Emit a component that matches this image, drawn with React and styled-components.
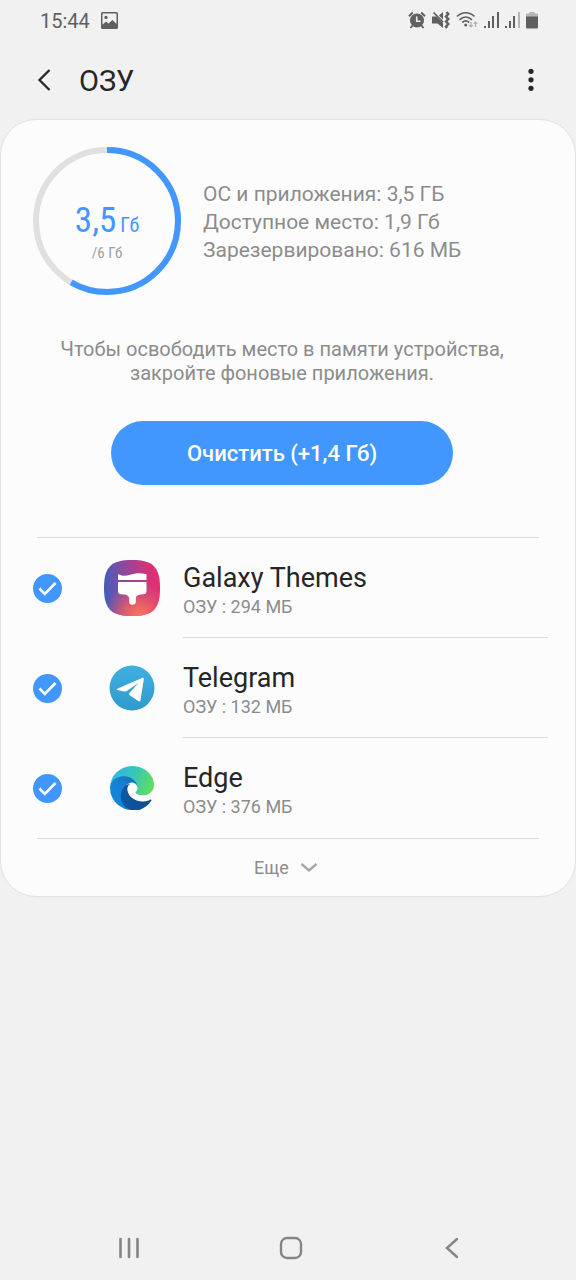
import React, { useState } from 'react'
import styled, { createGlobalStyle } from 'styled-components'

const GlobalStyle = createGlobalStyle`
  * {
    box-sizing: border-box;
  }

  body {
    margin: 0;
    background: #f1f1f1;
    color: #262626;
    font-family: Roboto, 'Noto Sans', sans-serif;
  }

  button {
    padding: 0;
    border: 0;
    background: none;
    color: inherit;
    font: inherit;
    cursor: pointer;
  }

  svg {
    display: block;
    flex-shrink: 0;
  }
`

const Page = styled.div`
  min-height: 100vh;
  display: flex;
  flex-direction: column;
`

const StatusBar = styled.div`
  height: 40px;
  padding: 0 38px 0 40px;
  display: flex;
  align-items: center;
  justify-content: space-between;
  color: #606060;
`

const StatusGroup = styled.div`
  display: flex;
  align-items: center;
  gap: ${props => props.$gap}px;
`

const Clock = styled.span`
  padding-top: 2px;
  font-size: 20px;
  line-height: 24px;
`

const Header = styled.header`
  height: 79px;
  padding: 0 33px 0 32px;
  display: flex;
  align-items: center;
  gap: 23px;
`

const IconButton = styled.button`
  width: 24px;
  height: 32px;
  display: flex;
  align-items: center;
  justify-content: center;
`

const Title = styled.h1`
  flex: 1;
  margin: 0;
  padding-top: 2px;
  font-size: 29px;
  font-weight: 400;
  line-height: 32px;
`

const Card = styled.main`
  border: 1px solid #e2e2e2;
  border-radius: 36px;
  background: #fcfcfc;
`

const Summary = styled.section`
  padding: 27px 32px 0;
  display: flex;
  align-items: center;
  gap: 22px;
`

const Gauge = styled.div`
  display: grid;
  place-items: center;

  > * {
    grid-area: 1 / 1;
  }
`

const GaugeText = styled.div`
  padding-top: 24px;
  text-align: center;
  font-family: 'Roboto Condensed', 'Liberation Sans Narrow', Roboto, sans-serif;
`

const Used = styled.div`
  color: #4297ff;
  font-size: 35px;
  line-height: 36px;

  small {
    margin-left: 4px;
    font-size: 20px;
  }
`

const Total = styled.div`
  color: #a0a0a0;
  font-size: 15px;
  line-height: 20px;
`

const Details = styled.ul`
  margin: 0;
  padding: 2px 0 0;
  list-style: none;
  color: #8c8c8c;
  font-size: 21px;
  line-height: 28px;
`

const Cleanup = styled.section`
  padding: 42px 44px 52px 32px;
  display: flex;
  flex-direction: column;
  align-items: center;
  gap: 36px;
`

const Hint = styled.p`
  max-width: 480px;
  margin: 0;
  color: #8c8c8c;
  font-size: 20px;
  line-height: 24px;
  text-align: center;
`

const CleanButton = styled.button`
  width: 100%;
  max-width: 342px;
  height: 64px;
  border-radius: 32px;
  background: #4297ff;
  color: #fff;
  font-size: 22px;
  font-weight: 500;
`

const Divider = styled.hr`
  height: 1px;
  margin: 0 36px;
  border: 0;
  background: #d9d9d9;
`

const AppList = styled.ul`
  margin: 0;
  padding: 0;
  list-style: none;
`

const AppRow = styled.label`
  height: 100px;
  padding: 0 27px 0 32px;
  display: flex;
  align-items: center;
  cursor: pointer;
`

const Check = styled.span`
  display: grid;
  place-items: center;

  > * {
    grid-area: 1 / 1;
  }

  svg {
    pointer-events: none;
  }
`

const CheckInput = styled.input`
  appearance: none;
  width: 29px;
  height: 29px;
  margin: 0;
  border: 2px solid #b4b4b4;
  border-radius: 50%;

  &:checked {
    border-color: #4297ff;
    background: #4297ff;
  }
`

const AppIcon = styled.span`
  width: 56px;
  margin: 0 23px 0 42px;
  display: flex;
  justify-content: center;
`

const AppInfo = styled.span`
  flex: 1;
  height: 100px;
  padding-top: 7px;
  display: flex;
  flex-direction: column;
  justify-content: center;
  border-bottom: 1px solid #dcdcdc;

  li:last-child & {
    border-color: transparent;
  }
`

const AppName = styled.span`
  font-size: 27px;
  line-height: 32px;
`

const AppMemory = styled.span`
  color: #8c8c8c;
  font-size: 18px;
  line-height: 26px;
`

const MoreButton = styled.button`
  width: 100%;
  height: 57px;
  padding-right: 4px;
  display: flex;
  align-items: center;
  justify-content: center;
  gap: 11px;
  color: #8c8c8c;
  font-size: 18px;
`

const NavBar = styled.nav`
  height: 64px;
  margin-top: auto;
  padding: 0 108px 0 113px;
  display: flex;
  align-items: center;
  justify-content: space-between;
  color: #858585;
`

const NavButton = styled.button`
  width: 32px;
  height: 32px;
  display: flex;
  align-items: center;
  justify-content: center;
`

const PictureIcon = () => (
  <svg width="17" height="17" viewBox="0 0 17 17">
    <path
      fill="currentColor"
      fillRule="evenodd"
      d="M1.500 0h14A1.500 1.500 0 0 1 17 1.500v14a1.500 1.500 0 0 1-1.500 1.500h-14A1.500 1.500 0 0 1 0 15.500v-14A1.500 1.500 0 0 1 1.500 0zM1.500 1.500v11.300L5 9.500l2.500 2L11.500 8l4 4V1.500zM5 3.700a1.700 1.700 0 1 1 0 3.400 1.700 1.700 0 0 1 0-3.400z"
    />
  </svg>
)

const AlarmIcon = () => (
  <svg width="18" height="18" viewBox="0 0 18 18" fill="none" stroke="currentColor">
    <circle cx="9" cy="9.500" r="7" fill="currentColor" stroke="none" />
    <path d="M1 5.200 4.800 1.500M17 5.200l-3.800-3.700" strokeWidth="2" />
    <path d="M4.500 14.500 2.500 17M13.500 14.500l2 2.500" strokeWidth="2" />
    <path d="M8.700 5.500v4.700h3.800" stroke="#f1f1f1" strokeWidth="1.600" />
  </svg>
)

const MuteIcon = () => (
  <svg width="18" height="18" viewBox="0 0 18 18" fill="none" stroke="currentColor">
    <path fill="currentColor" stroke="none" d="M0 5.500h4.500L11 12v5l-5.500-4.500H0zM7 4.500 11 1v7.500z" />
    <path d="m1.500 1.500 9.500 9.500" strokeWidth="1.700" />
    <path d="m14.500 1 1.800 2-2.300 2.500 2.300 2.500L14 10.500l2.300 2.500-2.300 2.500 1 1.500" strokeWidth="2.400" />
  </svg>
)

const WifiIcon = () => (
  <svg width="22" height="18" viewBox="0 0 22 18" fill="none" stroke="currentColor">
    <path d="M1 5.500c5-5 12.500-5 17.500 0M3.500 8.800c3.800-3.600 8.700-3.600 12.500 0M6.300 11.500c2.200-2 4.700-2 6.900 0" strokeWidth="1.700" />
    <circle cx="9.700" cy="14" r="1.500" fill="currentColor" stroke="none" />
    <path d="M15 11v5M13.200 14.200 15 16l1.800-1.800M19.500 16v-5M17.700 12.800 19.500 11l1.800 1.800" stroke="#b0b0b0" strokeWidth="1.200" />
  </svg>
)

const SignalIcon = ({ weak }) => (
  <svg width="15" height="18" viewBox="0 0 15 18" fill="currentColor">
    <rect x="0" y="15" width="2" height="2" />
    <rect x="4" y="10" width="2" height="7" />
    <rect x="8" y="5" width="2" height="12" />
    <rect x="13" y="1" width="2" height="16" opacity={weak ? 0.4 : 1} />
  </svg>
)

const BatteryIcon = () => (
  <svg width="12" height="18" viewBox="0 0 12 18" fill="currentColor">
    <path d="M3.500 1h5v1.500H11a1 1 0 0 1 1 1V6H0V3.500a1 1 0 0 1 1-1h2.500z" opacity="0.4" />
    <path d="M0 5.500h12v11a1 1 0 0 1-1 1H1a1 1 0 0 1-1-1z" />
  </svg>
)

const BackIcon = () => (
  <svg width="14" height="24" viewBox="0 0 14 24" fill="none" stroke="currentColor">
    <path d="M12.500 2 2.500 12l10 10" strokeWidth="2.300" />
  </svg>
)

const DotsIcon = () => (
  <svg width="6" height="24" viewBox="0 0 6 24" fill="currentColor">
    <circle cx="3" cy="3.300" r="2.600" />
    <circle cx="3" cy="11.800" r="2.600" />
    <circle cx="3" cy="20.300" r="2.600" />
  </svg>
)

const Ring = ({ share }) => {
  const length = 2 * Math.PI * 71
  return (
    <svg width="148" height="148" viewBox="0 0 148 148" fill="none" strokeWidth="6">
      <circle cx="74" cy="74" r="71" stroke="#e0e0e0" />
      <circle
        cx="74"
        cy="74"
        r="71"
        stroke="#4297ff"
        strokeDasharray={`${length * share} ${length}`}
        transform="rotate(-90 74 74)"
      />
    </svg>
  )
}

const ThemesIcon = () => (
  <svg width="56" height="56" viewBox="0 0 56 56">
    <defs>
      <linearGradient id="themesBase" x1="0" y1="0.500" x2="1" y2="0.400">
        <stop offset="0.050" stopColor="#4a5ab8" />
        <stop offset="0.450" stopColor="#9a4598" />
        <stop offset="0.900" stopColor="#e02f72" />
      </linearGradient>
      <radialGradient id="themesGlow" cx="0.620" cy="1.020" r="0.650">
        <stop offset="0" stopColor="#fb7a58" />
        <stop offset="0.400" stopColor="#f2645f" stopOpacity="0.800" />
        <stop offset="1" stopColor="#e0507a" stopOpacity="0" />
      </radialGradient>
    </defs>
    <path fill="url(#themesBase)" d="M28 0c21 0 28 7 28 28s-7 28-28 28S0 49 0 28 7 0 28 0z" />
    <path fill="url(#themesGlow)" d="M28 0c21 0 28 7 28 28s-7 28-28 28S0 49 0 28 7 0 28 0z" />
    <path
      fill="#fff"
      d="M14 14c3.500 2 7.500 2.300 12 .8 6-2 11-2 16.500-.6V20H14zM14 22h28.500v9c0 2-1 3-3 3.200l-3 .3c-3.500.4-4.700 2-4.700 4.500v2.500a3.300 3.300 0 0 1-6.600 0V39c0-2.500-1.400-4.100-4.700-4.500l-3.500-.3c-2-.2-3-1.200-3-3.200z"
    />
  </svg>
)

const TelegramIcon = () => (
  <svg width="46" height="46" viewBox="0 0 46 46">
    <defs>
      <linearGradient id="telegram" x1="0" y1="0" x2="0" y2="1">
        <stop offset="0" stopColor="#3fb0e0" />
        <stop offset="1" stopColor="#309acb" />
      </linearGradient>
    </defs>
    <circle cx="23" cy="23" r="22.500" fill="url(#telegram)" />
    <path
      fill="#fff"
      d="M8.200 23.800 33 13c1.300-.5 2 .2 1.800 1.500L31.500 35c-.3 1.600-1.300 1.900-2.500 1.100l-8.500-6.200c-.8-.6-.8-1.200-.1-1.900L29.500 18l-12.200 8.200c-.8.5-1.500.5-2.300.3l-6.500-1.400c-.9-.2-1-.9-.3-1.300z"
    />
  </svg>
)

const EdgeIcon = () => (
  <svg width="44" height="44" viewBox="0 0 256 256">
    <defs>
      <linearGradient id="edgeDeep" x1="63" y1="177" x2="241" y2="177" gradientUnits="userSpaceOnUse">
        <stop offset="0" stopColor="#0c59a4" />
        <stop offset="1" stopColor="#114a8b" />
      </linearGradient>
      <linearGradient id="edgeBlue" x1="157" y1="99" x2="46" y2="221" gradientUnits="userSpaceOnUse">
        <stop offset="0" stopColor="#1474c4" />
        <stop offset="0.400" stopColor="#1580d0" />
        <stop offset="1" stopColor="#1286dc" />
      </linearGradient>
      <linearGradient id="edgeTop" x1="20" y1="60" x2="235" y2="140" gradientUnits="userSpaceOnUse">
        <stop offset="0" stopColor="#35b8e0" />
        <stop offset="0.450" stopColor="#37c4bb" />
        <stop offset="1" stopColor="#5cdf60" />
      </linearGradient>
    </defs>
    <path
      fill="url(#edgeBlue)"
      d="M105.700 241.400a79.200 79.200 0 0 1-22.700-21.300 80.700 80.700 0 0 1 29.500-120c3.200-1.500 8.500-4.100 15.600-4a32.400 32.400 0 0 1 25.700 13 31.900 31.900 0 0 1 6.300 18.700c0-.2 24.500-79.600-80-79.600-43.900 0-80 41.700-80 78.200a130.200 130.200 0 0 0 12.100 56 128 128 0 0 0 156.400 67.100 75.500 75.500 0 0 1-62.900-8.100z"
    />
    <path
      fill="url(#edgeDeep)"
      d="M235.700 195.500a93.700 93.700 0 0 1-10.600 4.700 101.900 101.900 0 0 1-35.900 6.400c-47.300 0-88.500-32.500-88.500-74.300a31.500 31.500 0 0 1 16.400-27.300c-42.800 1.800-53.800 46.400-53.800 72.500 0 74 68.100 81.400 82.800 81.400 7.900 0 19.800-2.300 27-4.600l1.300-.4a128.300 128.300 0 0 0 66.600-52.800 4 4 0 0 0-5.300-5.600z"
    />
    <path
      fill="url(#edgeTop)"
      d="M152.300 148.900c-.8 1-3.300 2.500-3.300 5.700 0 2.600 1.700 5.100 4.700 7.200 14.400 10 41.500 8.700 41.600 8.700a59.600 59.600 0 0 0 30.300-8.300 61.400 61.400 0 0 0 30.400-52.900c.3-22.400-8-37.300-11.300-43.900C223.500 23.900 177.700 0 128 0A128 128 0 0 0 0 126.200c.5-36.500 36.800-66 80-66 3.500 0 23.500.3 42 10.100 16.300 8.600 24.900 18.900 30.800 29.200 6.200 10.700 7.300 24.100 7.300 29.500 0 5.300-2.700 13.300-7.800 19.900z"
    />
  </svg>
)

const apps = [
  { name: 'Galaxy Themes', memory: 294, Icon: ThemesIcon },
  { name: 'Telegram', memory: 132, Icon: TelegramIcon },
  { name: 'Edge', memory: 376, Icon: EdgeIcon }
]

export default function App() {
  const [selected, setSelected] = useState(apps.map(app => app.name))

  const toggle = name =>
    setSelected(
      selected.includes(name)
        ? selected.filter(el => el !== name)
        : [...selected, name]
    )

  return (
    <Page>
      <GlobalStyle />
      <StatusBar>
        <StatusGroup $gap={11}>
          <Clock>15:44</Clock>
          <PictureIcon />
        </StatusGroup>
        <StatusGroup $gap={6}>
          <AlarmIcon />
          <MuteIcon />
          <WifiIcon />
          <SignalIcon />
          <SignalIcon weak />
          <BatteryIcon />
        </StatusGroup>
      </StatusBar>

      <Header>
        <IconButton aria-label="Назад">
          <BackIcon />
        </IconButton>
        <Title>ОЗУ</Title>
        <IconButton aria-label="Меню">
          <DotsIcon />
        </IconButton>
      </Header>

      <Card>
        <Summary>
          <Gauge>
            <Ring share={3.5 / 6} />
            <GaugeText>
              <Used>
                3,5<small>Гб</small>
              </Used>
              <Total>/6 Гб</Total>
            </GaugeText>
          </Gauge>
          <Details>
            <li>ОС и приложения: 3,5 ГБ</li>
            <li>Доступное место: 1,9 Гб</li>
            <li>Зарезервировано: 616 МБ</li>
          </Details>
        </Summary>

        <Cleanup>
          <Hint>
            Чтобы освободить место в памяти устройства, закройте фоновые
            приложения.
          </Hint>
          <CleanButton>Очистить (+1,4 Гб)</CleanButton>
        </Cleanup>

        <Divider />
        <AppList>
          {apps.map(({ name, memory, Icon }) => (
            <li key={name}>
              <AppRow>
                <Check>
                  <CheckInput
                    type="checkbox"
                    checked={selected.includes(name)}
                    onChange={() => toggle(name)}
                  />
                  <svg width="29" height="29" viewBox="0 0 29 29" fill="none">
                    <path d="m6.500 14.500 5.300 5.300L22.500 9" stroke="#fff" strokeWidth="2.600" />
                  </svg>
                </Check>
                <AppIcon>
                  <Icon />
                </AppIcon>
                <AppInfo>
                  <AppName>{name}</AppName>
                  <AppMemory>ОЗУ : {memory} МБ</AppMemory>
                </AppInfo>
              </AppRow>
            </li>
          ))}
        </AppList>
        <Divider />
        <MoreButton>
          Еще
          <svg width="18" height="12" viewBox="0 0 18 12" fill="none">
            <path d="m1.500 2 7.500 6.500L16.500 2" stroke="#a6a6a6" strokeWidth="2.400" />
          </svg>
        </MoreButton>
      </Card>

      <NavBar>
        <NavButton aria-label="Недавние">
          <svg width="22" height="22" viewBox="0 0 22 22" stroke="currentColor" strokeWidth="2.600" strokeLinecap="round">
            <path d="M2.500 2v18M11 2v18M19.500 2v18" />
          </svg>
        </NavButton>
        <NavButton aria-label="Домой">
          <svg width="24" height="24" viewBox="0 0 24 24" fill="none" stroke="currentColor" strokeWidth="2.400">
            <rect x="2" y="2" width="20" height="20" rx="6" />
          </svg>
        </NavButton>
        <NavButton aria-label="Назад">
          <svg width="14" height="22" viewBox="0 0 14 22" fill="none" stroke="currentColor" strokeWidth="2.400" strokeLinecap="round">
            <path d="m12 2-10 9 10 9" />
          </svg>
        </NavButton>
      </NavBar>
    </Page>
  )
}
